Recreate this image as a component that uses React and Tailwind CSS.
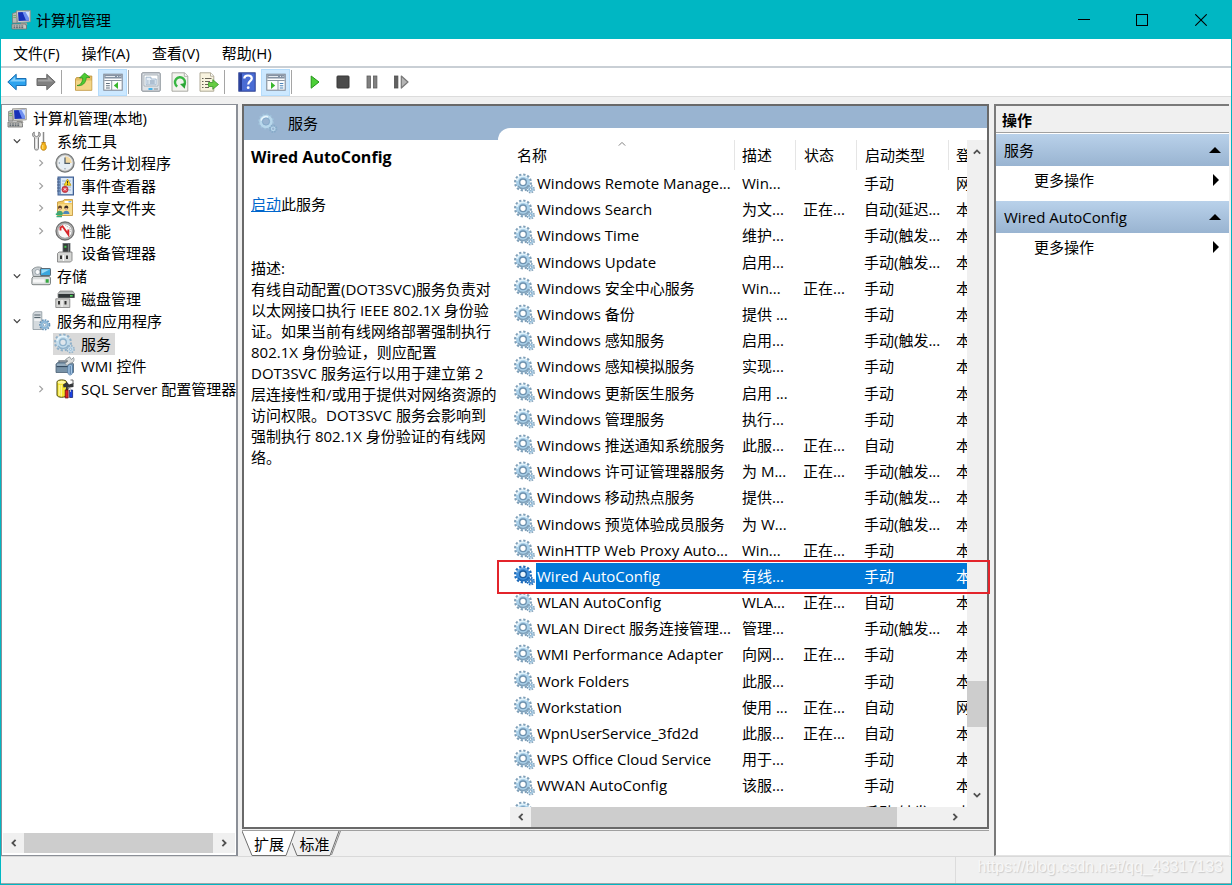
import React from "react";

/* ---------- icons ---------- */

function Gear({ selected = false, pale = false }) {
  const c = selected
    ? { edge: "#1c69b8", body: "#3f8fdb", ring: "#1b5c9e", hole: "#e8f3fc" }
    : pale
      ? { edge: "#8fb0c9", body: "#c3dcec", ring: "#8fb3cd", hole: "#dfe6ec" }
      : { edge: "#7f9fb8", body: "#a9cfe8", ring: "#6f93b0", hole: "#ffffff" };
  return (
    <svg viewBox="0 0 22 21" className="h-[21px] w-[22px] shrink-0" aria-hidden="true">
      <circle cx="9" cy="9.5" r="7.7" fill="none" stroke={c.edge} strokeWidth="2.6" strokeDasharray="2.2 1.83" />
      <circle cx="9" cy="9.5" r="6.9" fill={c.body} />
      <path d="M3 8 A6.3 6.3 0 0 1 13 4.6" fill="none" stroke="#e6f5fd" strokeWidth="1.6" opacity={selected ? 0.3 : 0.9} />
      <path d="M4 13 A6.3 6.3 0 0 0 14.6 12" fill="none" stroke={c.edge} strokeWidth="1.4" />
      <circle cx="9" cy="9.3" r="3.3" fill={c.hole} stroke={c.ring} strokeWidth="1.4" />
      <circle cx="16.6" cy="16.2" r="3.3" fill="none" stroke={c.edge} strokeWidth="2" strokeDasharray="1.5 1.1" />
      <circle cx="16.6" cy="16.2" r="2.7" fill={c.body} />
      <circle cx="16.6" cy="16.2" r="1.2" fill={c.hole} stroke={c.ring} strokeWidth="0.8" />
    </svg>
  );
}

function PaleGear() {
  return (
    <svg viewBox="0 0 22 21" className="h-[21px] w-[22px] shrink-0" aria-hidden="true">
      <circle cx="9" cy="8.5" r="7.2" fill="none" stroke="#9fc1da" strokeWidth="1.8" strokeDasharray="2 1.77" />
      <circle cx="9" cy="8.5" r="5.2" fill="none" stroke="#b8d8ec" strokeWidth="3" />
      <path d="M4.2 7.5 A5 5 0 0 1 11 4" fill="none" stroke="#e9f6fd" strokeWidth="1.6" />
      <circle cx="9" cy="8.5" r="3.6" fill="none" stroke="#7fa6c6" strokeWidth="0.8" />
      <circle cx="16.2" cy="15.8" r="3.2" fill="none" stroke="#86abc9" strokeWidth="2" strokeDasharray="1.5 1" />
      <circle cx="16.2" cy="15.8" r="1.8" fill="none" stroke="#b8d8ec" strokeWidth="1.2" />
    </svg>
  );
}

function Icon({ children }) {
  return (
    <svg viewBox="0 0 20 20" className="h-5 w-5 shrink-0" aria-hidden="true">
      {children}
    </svg>
  );
}

const ComputerIcon = () => (
  <Icon>
    <path d="M1.5 3.5 L6 2 V13 H1.5 Z" fill="#b9b9b4" stroke="#77777a" strokeWidth="0.7" />
    <path d="M2.3 5.5 H5 M2.3 7.5 H5" stroke="#6fae62" strokeWidth="0.9" />
    <path d="M5.5 0.8 L19.3 0.4 V11.8 L6.5 12.6 Z" fill="#d6d5cf" stroke="#8d8b86" strokeWidth="0.8" />
    <path d="M7 2.2 L18 1.8 V10.4 L7.6 11 Z" fill="#1730b8" />
    <path d="M11.5 2 L18 1.8 V10.4 L15 10.6 Z" fill="#6f8ff0" />
    <path d="M14.5 2 L18 1.8 V8 Z" fill="#cfe0ff" />
    <path d="M10 12.5 H15.5 L16.5 15 H9.5 Z" fill="#a3a19b" />
    <path d="M1 14 H14.5 L15.5 16 V19 H1 Z" fill="#c4c4bf" stroke="#6e6e70" strokeWidth="0.8" />
    <path d="M2.5 16 H13 M2.5 17.7 H13" stroke="#4c5560" strokeWidth="1" strokeDasharray="1.8 0.8" />
  </Icon>
);

const ToolsIcon = () => (
  <Icon>
    <path d="M3.2 1 C1 2 0.8 5 3.5 6.6 V17.5 C3.5 19.6 7.5 19.6 7.5 17.5 V6.6 C10 5 9.8 2 7.8 1 V4.5 L5.5 5.6 L3.2 4.5 Z" fill="#d8d8d8" stroke="#747474" strokeWidth="0.9" />
    <path d="M5.4 8 V17" stroke="#fafafa" strokeWidth="1.1" />
    <path d="M12.5 1 V8 M12.5 8 V12" stroke="#8a8a8a" strokeWidth="1.5" />
    <path d="M10.8 11.5 H14.4 L14 13 C16 15 15.8 19.3 12.6 19.3 C9.4 19.3 9.2 15 11.2 13 Z" fill="#f5b419" stroke="#b87808" strokeWidth="0.8" />
    <path d="M11.8 14 V18" stroke="#ffe58a" strokeWidth="1" />
  </Icon>
);

const ClockIcon = () => (
  <Icon>
    <circle cx="10" cy="10" r="9.1" fill="#b9bbbb" stroke="#747777" strokeWidth="1.2" />
    <circle cx="10" cy="10" r="7.1" fill="#e6eef5" stroke="#f9f9f9" strokeWidth="0.8" />
    <path d="M10 3.2 A6.8 6.8 0 0 1 16.8 10 H10 Z" fill="#f3d9a1" />
    <path d="M10 4.5 V10.4 H15" fill="none" stroke="#52606c" strokeWidth="1.3" />
    <path d="M10 15.2 V16.4 M3.7 10 H5" stroke="#71808c" strokeWidth="1" />
  </Icon>
);

const EventIcon = () => (
  <Icon>
    <rect x="3" y="1" width="15.5" height="18" fill="#7b9cc8" stroke="#405f91" />
    <rect x="6" y="2" width="11.5" height="16" fill="#dce8f6" />
    <path d="M7 5 H16 M7 8 H16 M7 11 H16 M7 14 H16" stroke="#8aa7d1" strokeWidth="0.8" />
    <path d="M2 3 H5 M2 6 H5 M2 9 H5 M2 12 H5 M2 15 H5" stroke="#4c6288" strokeWidth="1.1" />
    <path d="M12.5 3 L16 9.3 H9 Z" fill="#ffd91e" stroke="#bd9300" strokeWidth="0.7" />
    <path d="M12.5 5 V7.5 M12.5 8 V8.8" stroke="#222" strokeWidth="0.9" />
    <circle cx="10" cy="13.4" r="3.1" fill="#dd3f4c" stroke="#9f2532" strokeWidth="0.6" />
    <path d="M8.8 12.2 L11.2 14.6 M11.2 12.2 L8.8 14.6" stroke="#fff" strokeWidth="0.9" />
  </Icon>
);

const SharedIcon = () => (
  <Icon>
    <path d="M2.5 4 L8 3 L9.3 1.5 H17.5 V17.5 H2.5 Z" fill="#f0c761" stroke="#c09335" strokeWidth="0.8" />
    <path d="M9.5 3 H16.8 V5 H9.5 Z" fill="#fff" />
    <path d="M13.5 3.8 H16.3" stroke="#3d93de" strokeWidth="1" />
    <path d="M3 6.2 H17 V17 H3 Z" fill="#f9dd8c" />
    <circle cx="5" cy="9.5" r="2" fill="#654527" />
    <circle cx="11.3" cy="9.5" r="2" fill="#3b2d25" />
    <path d="M4 10 H6.2 V12 H4 Z M10.2 10 H12.5 V12 H10.2 Z" fill="#e3b18d" />
    <path d="M1.5 16 C1.5 11.5 8 11.5 8 16 Z" fill="#4aa273" />
    <path d="M8 16 C8 11.5 14.5 11.5 14.5 16 Z" fill="#4f87b8" />
    <path d="M0.8 16.2 H7.5 M1.5 18.5 H7" stroke="#36ad77" strokeWidth="1.5" />
  </Icon>
);

const GaugeIcon = () => (
  <Icon>
    <circle cx="10" cy="10" r="9" fill="#b7b7b7" stroke="#707070" strokeWidth="1.3" />
    <circle cx="10" cy="10" r="7.2" fill="#fafafa" stroke="#898989" strokeWidth="0.7" />
    <path d="M5.5 9.5 V6.5 L7.5 5.2 L13.3 13.5 V8.5" fill="none" stroke="#d8262b" strokeWidth="1.9" />
    <path d="M10.5 4.5 L15.2 7.3 V11.5" fill="none" stroke="#9a9a9a" strokeWidth="0.9" strokeDasharray="1 1" />
  </Icon>
);

const DeviceIcon = () => (
  <Icon>
    <rect x="8" y="0.5" width="7" height="9.5" fill="#373b3b" stroke="#62686a" strokeWidth="0.8" />
    <rect x="9.4" y="2.8" width="2" height="2" fill="#43cb4b" />
    <path d="M13.4 1.2 V9.5" stroke="#7c8286" strokeWidth="1" />
    <path d="M2.5 10.5 L4 9 H17 V17.5 L15.5 19 H2.5 Z" fill="#d5d6d4" stroke="#777" strokeWidth="0.8" />
    <path d="M5 12.5 H7 V16 H5 Z M11 12.5 H13 V16 H11 Z" fill="#333" />
    <path d="M8.5 12 V18" stroke="#fff" strokeWidth="1" />
  </Icon>
);

const StorageIcon = () => (
  <Icon>
    <path d="M1 4 C3 1 8 0 11 2 V12 H2.5 Z" fill="#c7cdd0" stroke="#7a8386" strokeWidth="0.8" />
    <circle cx="6.5" cy="6" r="2.5" fill="#f7f9fa" stroke="#8f9ca4" strokeWidth="0.8" />
    <rect x="9.5" y="2.5" width="10" height="7" rx="0.6" fill="#3ba7dd" stroke="#555f66" strokeWidth="0.9" />
    <path d="M10.5 3.5 H18.6 L10.5 7.8 Z" fill="#9edcf7" />
    <path d="M1 12 L2.5 10.5 H18.5 L19.5 12 V17.5 Q19.5 18.7 18 18.7 H2 Q0.8 18.7 0.8 17.5 Z" fill="#dadddd" stroke="#727878" strokeWidth="0.9" />
    <path d="M2 13.3 H13.5 V16.5 H2 Z" fill="#f7f7f7" />
    <rect x="14.7" y="13.2" width="3" height="3.5" fill="#37a941" />
  </Icon>
);

const DiskIcon = () => (
  <Icon>
    <path d="M3 4.5 L5 2 H17.5 L19.5 4.5 V8.5 H3 Z" fill="#b7bbbb" stroke="#666" strokeWidth="0.6" />
    <path d="M3.3 5 H19.3 V8.7 H3.3 Z" fill="#303537" />
    <rect x="15" y="6" width="2.7" height="1.6" fill="#4bd559" />
    <path d="M0.8 9.8 H14.8 V18.5 H0.8 Z" fill="#d4d4d2" stroke="#7e7e7e" strokeWidth="0.8" />
    <path d="M3 12 H5 V15.5 H3 Z M9.5 12 H11.5 V15.5 H9.5 Z" fill="#313131" />
    <path d="M7 11 V18" stroke="#fff" strokeWidth="1" />
  </Icon>
);

const ServerGearIcon = () => (
  <Icon>
    <path d="M2 2.5 L4 0.7 H10.8 V18.5 H2 Z" fill="#d4dade" stroke="#8b979e" strokeWidth="0.8" />
    <path d="M3.3 4 H9.5 M3.3 6.5 H9.5" stroke="#56656e" strokeWidth="1.2" />
    <path d="M3.3 9 H9.5" stroke="#fff" strokeWidth="1.2" />
    <circle cx="13.7" cy="13.8" r="4.7" fill="none" stroke="#6490b5" strokeWidth="1.9" strokeDasharray="1.6 1.1" />
    <circle cx="13.7" cy="13.8" r="3.2" fill="#edf5fa" stroke="#8bb6d7" strokeWidth="2.1" />
    <circle cx="13.7" cy="13.8" r="1.4" fill="#fff" stroke="#5e89ac" strokeWidth="0.7" />
  </Icon>
);

const WmiIcon = () => (
  <Icon>
    <path d="M4 7 V5 H12 V7" fill="none" stroke="#6e7780" strokeWidth="1.3" />
    <path d="M1 8 L3 6.3 H17 L18.5 8 V16.5 H1 Z" fill="#7892a7" stroke="#4b6175" strokeWidth="0.8" />
    <path d="M1.5 10.5 H13" stroke="#344b60" strokeWidth="1.2" />
    <path d="M2 9 H13" stroke="#bbcfde" strokeWidth="0.9" />
    <path d="M10.5 3.5 L14.5 0.8 L16.5 3.5 L18.5 1.5 C20 4.5 18 7 15.8 7 L12 9.5 L10 7.5 L13 5 Z" fill="#dcdede" stroke="#777f84" strokeWidth="0.7" />
    <path d="M13 9.5 C14 8.5 17 8.5 17.5 9.5 V16 C17.5 20 12.8 20 12.8 16 Z" fill="#a9c9e5" stroke="#4a77a4" strokeWidth="0.8" />
    <path d="M15.2 10 V18" stroke="#3d6896" strokeWidth="0.9" />
  </Icon>
);

const SqlIcon = () => (
  <Icon>
    <path d="M2 3 C2 0.2 11.5 0.2 11.5 3 V16 C11.5 19 2 19 2 16 Z" fill="#f5e52f" stroke="#4b470c" strokeWidth="1" />
    <ellipse cx="6.7" cy="3.2" rx="4" ry="1.5" fill="#fff9a0" />
    <path d="M4.2 6 V16.5 M6.2 6 V17.5" stroke="#fffcc0" strokeWidth="1" />
    <path d="M8 5.5 L12 3 L14 5.5 L18.5 4 V8 L15 8.5 L13 11 H10.5 L11.5 8 L8.5 8.5 Z" fill="#35383a" />
    <path d="M15.5 1 H18 V5" fill="none" stroke="#666" strokeWidth="1" />
    <path d="M10.2 11 H13.2 V19 H10.2 Z" fill="#df1f25" stroke="#5c0b0d" strokeWidth="0.7" />
    <path d="M14.6 11 H17.6 V18.5 H14.6 Z" fill="#1c42e2" stroke="#0a1760" strokeWidth="0.7" />
    <path d="M12.7 9 H15.5 V13" stroke="#ccc" strokeWidth="0.9" fill="none" />
  </Icon>
);

/* ---------- toolbar icons ---------- */

const BackIcon = () => (
  <Icon>
    <path d="M0.8 10 L9.2 2.2 V6.5 H19 V13.5 H9.2 V17.8 Z" fill="#2da3ee" stroke="#1a6fb4" strokeWidth="1" strokeLinejoin="round" />
    <path d="M3 9.6 L8.2 4.8 V7.8 H18 V9.6 Z" fill="#83cffb" />
  </Icon>
);
const ForwardIcon = () => (
  <Icon>
    <path d="M19.2 10 L10.8 2.2 V6.5 H1 V13.5 H10.8 V17.8 Z" fill="#808080" stroke="#696969" strokeWidth="1" strokeLinejoin="round" />
    <path d="M17 9.6 L11.8 4.8 V7.8 H2 V9.6 Z" fill="#a3a3a3" />
  </Icon>
);
const FolderUpIcon = () => (
  <Icon>
    <path d="M1.5 7 L2.5 5.5 H7.5 L9 4 H17.8 V18.3 H1.5 Z" fill="#e4bd62" stroke="#bb8f35" strokeWidth="0.8" />
    <path d="M2 8.5 H17.4 V17.8 H2 Z" fill="#f3d588" />
    <path d="M3 13.5 C7 13 8.5 10 8.7 6 H5.5 L10.5 1 L16 5.5 H12.3 C12 11 8.5 14.5 3 13.5 Z" fill="#4dcc32" stroke="#278c1c" strokeWidth="0.7" />
  </Icon>
);
const TreePaneIcon = () => (
  <Icon>
    <rect x="0.8" y="2.2" width="18.4" height="16" fill="#fbfcfd" stroke="#7b8490" />
    <path d="M1.3 2.7 H18.7 V6.5 H1.3 Z" fill="#8492a3" />
    <path d="M2.5 4.5 H12 M14 4.5 H15 M16.5 4.5 H17.5" stroke="#e7ebf0" strokeWidth="1" />
    <path d="M1.3 8.5 H18.7 M8.7 8.5 V18" stroke="#8b95a1" strokeWidth="1" />
    <path d="M3 11.5 H6.8 M3 13.7 H6.8 M3 16 H6.8" stroke="#63717f" strokeWidth="1.1" />
    <path d="M15 10 V17 L10.8 13.5 Z" fill="#38b72c" />
  </Icon>
);
const ActionPaneIcon = () => (
  <Icon>
    <rect x="0.8" y="2.2" width="18.4" height="16" fill="#fbfcfd" stroke="#7b8490" />
    <path d="M1.3 2.7 H18.7 V6.5 H1.3 Z" fill="#8492a3" />
    <path d="M2.5 4.5 H12 M14 4.5 H15 M16.5 4.5 H17.5" stroke="#e7ebf0" strokeWidth="1" />
    <path d="M1.3 8.5 H18.7 M12 8.5 V18" stroke="#8b95a1" strokeWidth="1" />
    <path d="M13.8 11.5 H17.3 M13.8 13.7 H17.3 M13.8 16 H17.3" stroke="#4a83ba" strokeWidth="1.1" />
    <path d="M5 10 V17 L9.2 13.5 Z" fill="#38b72c" />
  </Icon>
);
const PropertiesIcon = () => (
  <Icon>
    <rect x="0.8" y="0.8" width="18.4" height="18.4" rx="0.8" fill="#dfe3e7" stroke="#808890" />
    <path d="M3 3 H17 V14 H3 Z" fill="#fff" stroke="#9aa4ad" strokeWidth="0.8" />
    <path d="M5 5.2 H10 V7 H15.2 V12.8 H5 Z" fill="#e9f1f9" stroke="#93abc4" strokeWidth="0.8" />
    <path d="M6.3 9 H7.5 M8.7 9 H13.8 M6.3 11 H7.5 M8.7 11 H13.8" stroke="#68849f" strokeWidth="0.9" />
    <path d="M7.5 17 H11.5" stroke="#32aeea" strokeWidth="1.8" />
    <path d="M12.8 17 H17" stroke="#9099a1" strokeWidth="1.2" />
  </Icon>
);
const RefreshIcon = () => (
  <Icon>
    <path d="M2 0.8 H14.5 L17.8 4 V19.2 H2 Z" fill="#f3f3ee" stroke="#a1a19b" strokeWidth="0.9" />
    <path d="M14.3 1 V4.3 H17.5" fill="#fff" stroke="#a1a19b" strokeWidth="0.8" />
    <path d="M7.3 14.5 A5 5 0 1 1 13.3 14" fill="none" stroke="#38b642" strokeWidth="2.4" />
    <path d="M10 12 L15.7 11 L14.8 16.8 Z" fill="#2aa535" />
  </Icon>
);
const ExportIcon = () => (
  <Icon>
    <path d="M1 0.8 H11.5 L14.8 4 V19.2 H1 Z" fill="#f8f3df" stroke="#a7a18d" strokeWidth="0.9" />
    <path d="M11.5 1 V4.2 H14.7" fill="#fff" stroke="#a7a18d" strokeWidth="0.8" />
    <path d="M3 6.5 H4.5 M3 9.5 H4.5 M3 12.5 H4.5 M3 15.5 H4.5 M6 6.5 H12.5 M6 9.5 H11 M6 12.5 H9 M6 15.5 H10" stroke="#676457" strokeWidth="1.1" />
    <path d="M9.5 10.5 H13.8 V7.7 L19.5 12.5 L13.8 17.3 V14.5 H9.5 Z" fill="#65cd42" stroke="#37942b" strokeWidth="0.8" />
  </Icon>
);
const HelpIcon = () => (
  <Icon>
    <rect x="1.8" y="0.8" width="16.4" height="18.4" fill="#4a6cd4" stroke="#24378a" strokeWidth="0.9" />
    <path d="M2.3 1.3 H5 V18.7 H2.3 Z" fill="#24398f" />
    <path d="M7.3 6.5 C7.3 2.5 14.8 2.5 14.8 6.5 C14.8 9.3 11.2 9.2 11.2 12.6" fill="none" stroke="#fff" strokeWidth="2.2" />
    <circle cx="11.2" cy="15.7" r="1.4" fill="#fff" />
  </Icon>
);
const PlayIcon = () => (
  <Icon>
    <path d="M7.2 4 L15 10 L7.2 16.2 Z" fill="#4ccf38" stroke="#239518" strokeWidth="1" strokeLinejoin="round" />
  </Icon>
);
const StopIcon = () => (
  <Icon>
    <rect x="4" y="4" width="12" height="12" rx="0.8" fill="#4b4b4b" stroke="#383838" />
  </Icon>
);
const PauseIcon = () => (
  <Icon>
    <rect x="5" y="4" width="3.4" height="12" fill="#808080" stroke="#5c5c5c" strokeWidth="0.8" />
    <rect x="11.5" y="4" width="3.4" height="12" fill="#808080" stroke="#5c5c5c" strokeWidth="0.8" />
  </Icon>
);
const RestartIcon = () => (
  <Icon>
    <rect x="3.5" y="4" width="3.4" height="12" fill="#606060" stroke="#505050" strokeWidth="0.8" />
    <path d="M10.3 4 L17 10 L10.3 16 Z" fill="#b4b4b4" stroke="#777" strokeWidth="1.2" strokeLinejoin="round" />
  </Icon>
);

function Chevron({ dir, className = "h-2 w-2 text-[#505050]", width = 1.8 }) {
  const d = {
    left: "M5.6 0.8 L2.4 4 L5.6 7.2",
    right: "M2.4 0.8 L5.6 4 L2.4 7.2",
    up: "M0.8 5.6 L4 2.4 L7.2 5.6",
    down: "M0.8 2.4 L4 5.6 L7.2 2.4",
  }[dir];
  return (
    <svg viewBox="0 0 8 8" className={className} aria-hidden="true">
      <path d={d} fill="none" stroke="currentColor" strokeWidth={width} />
    </svg>
  );
}

/* ---------- data ---------- */

const TREE = [
  { label: "计算机管理(本地)", icon: ComputerIcon, level: 0 },
  { label: "系统工具", icon: ToolsIcon, level: 1, open: true },
  { label: "任务计划程序", icon: ClockIcon, level: 2, closed: true },
  { label: "事件查看器", icon: EventIcon, level: 2, closed: true },
  { label: "共享文件夹", icon: SharedIcon, level: 2, closed: true },
  { label: "性能", icon: GaugeIcon, level: 2, closed: true },
  { label: "设备管理器", icon: DeviceIcon, level: 2 },
  { label: "存储", icon: StorageIcon, level: 1, open: true },
  { label: "磁盘管理", icon: DiskIcon, level: 2 },
  { label: "服务和应用程序", icon: ServerGearIcon, level: 1, open: true },
  { label: "服务", icon: null, level: 2, selected: true },
  { label: "WMI 控件", icon: WmiIcon, level: 2 },
  { label: "SQL Server 配置管理器", icon: SqlIcon, level: 2, closed: true },
];

const INDENT = ["pl-[3px]", "pl-[3px]", "pl-[27px]"];

const ROWS = [
  ["Windows Remote Manage...", "Win...", "", "手动", "网"],
  ["Windows Search", "为文...", "正在...", "自动(延迟...", "本"],
  ["Windows Time", "维护...", "", "手动(触发...", "本"],
  ["Windows Update", "启用...", "", "手动(触发...", "本"],
  ["Windows 安全中心服务", "Win...", "正在...", "手动", "本"],
  ["Windows 备份", "提供 ...", "", "手动", "本"],
  ["Windows 感知服务", "启用...", "", "手动(触发...", "本"],
  ["Windows 感知模拟服务", "实现...", "", "手动", "本"],
  ["Windows 更新医生服务", "启用 ...", "", "手动", "本"],
  ["Windows 管理服务", "执行...", "", "手动", "本"],
  ["Windows 推送通知系统服务", "此服...", "正在...", "自动", "本"],
  ["Windows 许可证管理器服务", "为 M...", "正在...", "手动(触发...", "本"],
  ["Windows 移动热点服务", "提供...", "", "手动(触发...", "本"],
  ["Windows 预览体验成员服务", "为 W...", "", "手动(触发...", "本"],
  ["WinHTTP Web Proxy Auto...", "Win...", "正在...", "手动", "本"],
  ["Wired AutoConfig", "有线...", "", "手动", "本"],
  ["WLAN AutoConfig", "WLA...", "正在...", "自动", "本"],
  ["WLAN Direct 服务连接管理...", "管理...", "", "手动(触发...", "本"],
  ["WMI Performance Adapter", "向网...", "正在...", "手动", "本"],
  ["Work Folders", "此服...", "", "手动", "本"],
  ["Workstation", "使用 ...", "正在...", "自动", "网"],
  ["WpnUserService_3fd2d", "此服...", "正在...", "自动", "本"],
  ["WPS Office Cloud Service", "用于...", "", "手动", "本"],
  ["WWAN AutoConfig", "该服...", "", "手动", "本"],
  ["Xbox Accessory Manage...", "", "", "手动(触发...", "本"],
];

const SELECTED = "Wired AutoConfig";

/* ---------- parts ---------- */

function TitleBar() {
  return (
    <header className="flex h-[38px] shrink-0 items-center bg-[#00b7c3] pl-2.5">
      <ComputerIcon />
      <h1 className="pb-px pl-[5px] text-[15px] leading-5">计算机管理</h1>
      <div className="ml-auto flex h-full">
        <button type="button" aria-label="最小化" className="flex w-[58px] items-center justify-center">
          <svg viewBox="0 0 12 12" className="h-3 w-3"><path d="M0 5.5 H12" stroke="#000" /></svg>
        </button>
        <button type="button" aria-label="最大化" className="flex w-[58px] items-center justify-center">
          <svg viewBox="0 0 12 12" className="h-3 w-3"><rect x="0.5" y="0.5" width="11" height="11" fill="none" stroke="#000" /></svg>
        </button>
        <button type="button" aria-label="关闭" className="flex w-[60px] items-center justify-center">
          <svg viewBox="0 0 12 12" className="h-3 w-3"><path d="M0.3 0.3 L11.7 11.7 M11.7 0.3 L0.3 11.7" stroke="#000" strokeWidth="1.1" /></svg>
        </button>
      </div>
    </header>
  );
}

function MenuBar() {
  return (
    <nav className="flex h-[29px] shrink-0 items-center gap-[22px] border-b-2 border-[#c9cfd5] bg-white pl-3">
      {["文件(F)", "操作(A)", "查看(V)", "帮助(H)"].map((m) => (
        <button key={m} type="button" className="whitespace-nowrap leading-5">{m}</button>
      ))}
    </nav>
  );
}

function ToolButton({ label, active = false, children }) {
  return (
    <button
      type="button"
      aria-label={label}
      className={
        active
          ? "flex h-[27px] w-[29px] items-center justify-center border border-[#b5dcfb] bg-[#cce8ff]"
          : "flex h-[27px] w-[29px] items-center justify-center"
      }
    >
      {children}
    </button>
  );
}

const Divider = () => <span className="mr-[7px] ml-px h-6 w-px bg-[#a5a5a5]" />;

function ToolBar() {
  return (
    <div className="flex h-[29px] shrink-0 items-center border-b border-[#dcdcdc] bg-white pl-px">
      <ToolButton label="后退"><BackIcon /></ToolButton>
      <ToolButton label="前进"><ForwardIcon /></ToolButton>
      <Divider />
      <ToolButton label="上移一级"><FolderUpIcon /></ToolButton>
      <ToolButton label="显示/隐藏控制台树" active><TreePaneIcon /></ToolButton>
      <Divider />
      <ToolButton label="属性"><PropertiesIcon /></ToolButton>
      <ToolButton label="刷新"><RefreshIcon /></ToolButton>
      <ToolButton label="导出列表"><ExportIcon /></ToolButton>
      <Divider />
      <ToolButton label="帮助"><HelpIcon /></ToolButton>
      <ToolButton label="显示/隐藏操作窗格" active><ActionPaneIcon /></ToolButton>
      <Divider />
      <ToolButton label="启动服务"><PlayIcon /></ToolButton>
      <ToolButton label="停止服务"><StopIcon /></ToolButton>
      <ToolButton label="暂停服务"><PauseIcon /></ToolButton>
      <ToolButton label="重启动服务"><RestartIcon /></ToolButton>
    </div>
  );
}

function TreeItem({ item }) {
  const ItemIcon = item.icon;
  return (
    <li className={`flex items-center ${INDENT[item.level]}`}>
      {item.level > 0 && (
        <span className="flex w-6 shrink-0 justify-center">
          {item.open && <Chevron dir="down" className="h-2 w-2 text-[#404040]" width={1.3} />}
          {item.closed && <Chevron dir="right" className="h-2 w-2 text-[#a0a0a0]" width={1.2} />}
        </span>
      )}
      <button
        type="button"
        className={
          item.selected
            ? "flex h-[22px] items-center whitespace-nowrap bg-[#d9d9d9] pr-1"
            : "flex h-[22px] items-center whitespace-nowrap pr-1"
        }
      >
        <span className="flex w-6 shrink-0 justify-center overflow-hidden">
          {ItemIcon ? <ItemIcon /> : <Gear pale />}
        </span>
        <span className="pl-1 leading-5">{item.label}</span>
      </button>
    </li>
  );
}

function TreePane() {
  return (
    <aside className="flex w-[237px] shrink-0 flex-col overflow-hidden border border-r-2 border-[#8b8f97] bg-white">
      <ul className="grid h-[295px] shrink-0 auto-rows-fr pt-0.5">
        {TREE.map((item) => <TreeItem key={item.label} item={item} />)}
      </ul>
      <div className="mx-px mt-auto mb-0.5 flex h-5 items-stretch bg-[#f0f0f0]">
        <button type="button" aria-label="向左滚动" className="flex w-[21px] items-center justify-center"><Chevron dir="left" /></button>
        <div className="flex-1 bg-[#cdcdcd]" />
        <button type="button" aria-label="向右滚动" className="flex w-[22px] items-center justify-center"><Chevron dir="right" /></button>
      </div>
    </aside>
  );
}

function Description() {
  return (
    <section className="w-[254px] shrink-0 pt-[7px] pl-[7px]">
      <h2 className="text-base font-bold leading-5">Wired AutoConfig</h2>
      <p className="mt-[27px] leading-5"><a href="#start" className="text-[#0066cc] underline">启动</a>此服务</p>
      <p className="mt-11 whitespace-nowrap leading-[21px]">
        描述:<br />
        有线自动配置(DOT3SVC)服务负责对<br />
        以太网接口执行 IEEE 802.1X 身份验<br />
        证。如果当前有线网络部署强制执行<br />
        802.1X 身份验证，则应配置<br />
        DOT3SVC 服务运行以用于建立第 2<br />
        层连接性和/或用于提供对网络资源的<br />
        访问权限。DOT3SVC 服务会影响到<br />
        强制执行 802.1X 身份验证的有线网<br />
        络。
      </p>
    </section>
  );
}

function ServiceTable() {
  const head = "border-l border-[#e5e5e5] p-0 text-left font-normal";
  const cell = "overflow-hidden whitespace-nowrap p-0 pl-2";
  return (
    <table className="h-[685px] w-full table-fixed border-separate border-spacing-0 leading-5">
      <colgroup>
        <col className="w-[224px]" />
        <col className="w-[61px]" />
        <col className="w-[61px]" />
        <col className="w-[92px]" />
        <col />
      </colgroup>
      <thead>
        <tr className="h-[30px]">
          <th scope="col" className="relative p-0 pl-[7px] text-left font-normal">
            名称
            <Chevron dir="up" className="absolute top-0 left-[108px] h-2 w-2 text-[#808080]" width={1} />
          </th>
          <th scope="col" className={`${head} pl-[7px]`}>描述</th>
          <th scope="col" className={`${head} pl-2`}>状态</th>
          <th scope="col" className={`${head} pl-2`}>启动类型</th>
          <th scope="col" className={`${head} overflow-hidden pl-[7px]`}>登</th>
        </tr>
      </thead>
      <tbody>
        {ROWS.map(([name, desc, status, type, logon]) => {
          const on = name === SELECTED;
          const tint = on ? "bg-[#0078d7] text-white" : "";
          return (
            <tr key={name}>
              <td className="overflow-hidden p-0">
                <div className="flex h-[26px] items-center pl-1">
                  <Gear selected={on} />
                  <span className={`flex-1 whitespace-nowrap pl-px leading-[26px] ${tint}`}>{name}</span>
                </div>
              </td>
              <td className={`${cell} ${tint}`}>{desc}</td>
              <td className={`${cell} ${tint}`}>{status}</td>
              <td className={`${cell} ${tint}`}>{type}</td>
              <td className={`${cell} ${tint}`}>{logon}</td>
            </tr>
          );
        })}
      </tbody>
    </table>
  );
}

function ServiceList() {
  return (
    <section className="-mt-3 flex min-w-0 flex-1 flex-col rounded-tl-[12px] bg-white pt-3 pl-3">
      <div className="flex min-h-0 flex-1">
        <div className="min-w-0 flex-1 overflow-hidden"><ServiceTable /></div>
        <div className="flex w-5 shrink-0 flex-col bg-[#f0f0f0]">
          <button type="button" aria-label="向上滚动" className="flex h-6 items-center justify-center"><Chevron dir="up" /></button>
          <div className="flex-1" />
          <div className="h-[46px] bg-[#cdcdcd]" />
          <div className="h-14" />
          <button type="button" aria-label="向下滚动" className="flex h-6 items-center justify-center"><Chevron dir="down" /></button>
        </div>
      </div>
      <div className="flex h-5 shrink-0 bg-[#f0f0f0] pr-5">
        <button type="button" aria-label="向左滚动" className="flex w-[21px] items-center justify-center"><Chevron dir="left" /></button>
        <div className="flex-1 bg-[#cdcdcd]" />
        <div className="w-[46px]" />
        <button type="button" aria-label="向右滚动" className="flex w-6 items-center justify-center"><Chevron dir="right" /></button>
      </div>
    </section>
  );
}

function ViewTabs() {
  return (
    <div role="tablist" className="flex h-[26px] shrink-0 border-t border-[#a0a0a0]">
      <button type="button" role="tab" aria-selected="true" className="relative w-[50px] pl-1 leading-6">
        <svg viewBox="0 0 54 25" className="absolute inset-y-0 left-0 h-[25px] w-[54px]" aria-hidden="true">
          <path d="M0 0 L10 24.5 H44 L53 0 Z" fill="#fff" />
          <path d="M0 0 L10 24.5 H44 L53 0" fill="none" stroke="#6e6e6e" />
        </svg>
        <span className="relative">扩展</span>
      </button>
      <button type="button" role="tab" aria-selected="false" className="relative w-[45px] leading-6">
        <svg viewBox="0 0 50 25" className="absolute inset-y-0 left-0 h-[25px] w-[50px]" aria-hidden="true">
          <path d="M0 12 L5 24.5 H38 L47 0" fill="none" stroke="#6e6e6e" />
          <path d="M39.5 24 L48.5 0" fill="none" stroke="#8a8a8a" />
        </svg>
        <span className="relative">标准</span>
      </button>
    </div>
  );
}

function CenterPane() {
  return (
    <main className="relative flex min-w-0 flex-1 flex-col">
      <div className="flex min-h-0 flex-1 flex-col border-2 border-[#696969] bg-white">
        <div className="flex h-[34px] shrink-0 items-center bg-[#99b4d1] pl-[13px]">
          <PaleGear />
          <h2 className="pl-[9px] leading-5">服务</h2>
        </div>
        <div className="flex min-h-0 flex-1">
          <Description />
          <ServiceList />
        </div>
      </div>
      <div className="h-px shrink-0" />
      <ViewTabs />
      <div className="pointer-events-none absolute top-[456px] -right-px left-[255px] h-[34px] border-2 border-[#e3242b]" />
    </main>
  );
}

function ActionGroup({ title }) {
  return (
    <section>
      <button type="button" className="flex h-8 w-full items-center justify-between bg-linear-to-b from-[#b9d1ea] to-[#99b4d1] pr-2 pl-2">
        <span className="leading-5">{title}</span>
        <svg viewBox="0 0 12 6" className="h-1.5 w-3" aria-hidden="true"><path d="M0 6 L6 0 L12 6 Z" /></svg>
      </button>
      <button type="button" className="mb-[7px] flex h-7 w-full items-center justify-between pr-2.5 pl-[38px]">
        <span className="leading-5">更多操作</span>
        <svg viewBox="0 0 6 12" className="h-3 w-1.5" aria-hidden="true"><path d="M0 0 L6 6 L0 12 Z" /></svg>
      </button>
    </section>
  );
}

function ActionsPane() {
  return (
    <aside className="w-[235px] shrink-0 border-t-2 border-b border-l-2 border-t-[#7a7a7a] border-b-[#e3e3e3] border-l-[#7a7a7a] bg-white">
      <h2 className="mb-px h-[27px] border-b border-[#a0a0a0] bg-[#f0f0f0] pl-1.5 font-bold leading-[28px]">操作</h2>
      <ActionGroup title="服务" />
      <ActionGroup title="Wired AutoConfig" />
    </aside>
  );
}

function StatusBar() {
  return (
    <footer className="flex h-7 shrink-0 border-t border-b border-t-[#d9d9d9] border-b-[#9aa5a8] bg-[#f0f0f0]">
      <div className="flex-1" />
      <div className="flex w-[276px] items-start justify-end border-l border-[#dcdcdc] pr-2">
        <span className="whitespace-nowrap font-['Liberation_Sans'] text-base leading-5 text-[#f7f7f7] [text-shadow:1px_1px_1px_#cccccc]">
          https://blog.csdn.net/qq_43317133
        </span>
      </div>
    </footer>
  );
}

export default function App() {
  return (
    <div className="flex h-screen flex-col overflow-hidden border border-[#00b7c3] bg-[#f0f0f0] font-['Open_Sans','Noto_Sans_CJK_SC',sans-serif] text-[15px] text-black">
      <TitleBar />
      <MenuBar />
      <ToolBar />
      <div className="flex min-h-0 flex-1 pt-[7px] pr-0.5">
        <TreePane />
        <div className="w-1 shrink-0" />
        <CenterPane />
        <div className="w-[5px] shrink-0" />
        <ActionsPane />
      </div>
      <StatusBar />
    </div>
  );
}
